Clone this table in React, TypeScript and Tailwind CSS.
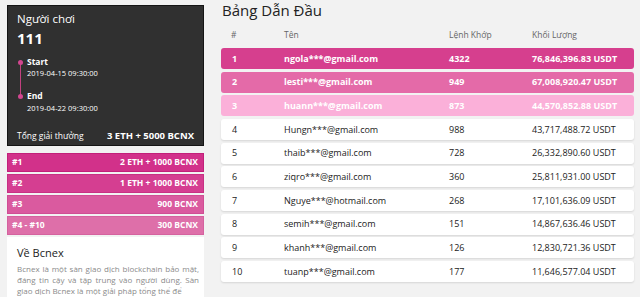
import React from "react";

const rows = [
  { n: 1, name: "ngola***@gmail.com", orders: "4322", vol: "76,846,396.83 USDT", bg: "bg-[#d63f8e]", hl: true },
  { n: 2, name: "lesti***@gmail.com", orders: "949", vol: "67,008,920.47 USDT", bg: "bg-[#e46aa8]", hl: true },
  { n: 3, name: "huann***@gmail.com", orders: "873", vol: "44,570,852.88 USDT", bg: "bg-[#fbb0d9]", hl: true },
  { n: 4, name: "Hungn***@gmail.com", orders: "988", vol: "43,717,488.72 USDT", bg: "bg-white", hl: false },
  { n: 5, name: "thaib***@gmail.com", orders: "728", vol: "26,332,890.60 USDT", bg: "bg-white", hl: false },
  { n: 6, name: "ziqro***@gmail.com", orders: "360", vol: "25,811,931.00 USDT", bg: "bg-white", hl: false },
  { n: 7, name: "Nguye***@hotmail.com", orders: "268", vol: "17,101,636.09 USDT", bg: "bg-white", hl: false },
  { n: 8, name: "semih***@gmail.com", orders: "151", vol: "14,867,636.46 USDT", bg: "bg-white", hl: false },
  { n: 9, name: "khanh***@gmail.com", orders: "126", vol: "12,830,721.36 USDT", bg: "bg-white", hl: false },
  { n: 10, name: "tuanp***@gmail.com", orders: "177", vol: "11,646,577.04 USDT", bg: "bg-white", hl: false },
];

const prizes = [
  { k: "#1", v: "2 ETH + 1000 BCNX", bg: "bg-[#d2318a] border-[#c2207a]" },
  { k: "#2", v: "1 ETH + 1000 BCNX", bg: "bg-[#d53e91] border-[#c83084]" },
  { k: "#3", v: "900 BCNX", bg: "bg-[#da5a9f] border-[#d04d94]" },
  { k: "#4 - #10", v: "300 BCNX", bg: "bg-[#de6fa9] border-[#d5629f]" },
];

export default function App() {
  return (
    <div
      className="w-[640px] h-[297px] overflow-hidden bg-[#f2f2f2] flex pl-[7px]"
      style={{ fontFamily: '"Open Sans", "Noto Sans", sans-serif' }}
    >
      {/* Left column */}
      <div className="w-[197px] shrink-0 flex flex-col pt-[5px] h-[297px]">
        <div className="h-[141px] shrink-0 bg-[#303030] border border-[#151515] text-white px-[9px] pt-[5px] flex flex-col">
          <div className="text-[11.5px] leading-[16px]">Người chơi</div>
          <div className="text-[15px] leading-[20px] font-bold mt-[1px]">111</div>
          <div className="relative mt-[8px] pl-[10px]">
            <div className="absolute left-[3px] top-[6px] w-[1px] h-[34px] bg-[#c2407f]" />
            <div className="absolute left-[0.5px] top-[3.5px] w-[5px] h-[5px] rounded-full bg-[#d24690]" />
            <div className="absolute left-[0.5px] top-[37.5px] w-[5px] h-[5px] rounded-full bg-[#d24690]" />
            <div className="text-[8.5px] leading-[12px] font-bold">Start</div>
            <div className="text-[7.5px] leading-[10px]">2019-04-15 09:30:00</div>
            <div className="text-[8.5px] leading-[12px] font-bold mt-[12px]">End</div>
            <div className="text-[7.5px] leading-[10px] mt-[1px]">2019-04-22 09:30:00</div>
          </div>
          <div className="mt-auto mb-[3px] flex justify-between items-center h-[12px]">
            <span className="text-[8.5px] leading-[12px]">Tổng giải thưởng</span>
            <span className="text-[9.5px] leading-[12px] font-bold">3 ETH + 5000 BCNX</span>
          </div>
        </div>

        <div className="mt-[7px] shrink-0 flex flex-col gap-[2px]">
          {prizes.map((p) => (
            <div
              key={p.k}
              className={`h-[19px] border ${p.bg} text-white font-bold text-[8.5px] flex items-center justify-between px-[4px]`}
            >
              <span>{p.k}</span>
              <span className="pr-[1px]">{p.v}</span>
            </div>
          ))}
        </div>

        <div className="mt-[2px] flex-1 min-h-0 overflow-hidden bg-white pl-[10px] pr-[5px] pt-[9px]">
          <div className="text-[11px] leading-[14px] text-[#222]">Về Bcnex</div>
          <p className="mt-[2.5px] text-[8px] leading-[11px] text-[#8a8a8a] text-justify">
            Bcnex là một sàn giao dịch blockchain bảo mật, đáng tin cậy và tập trung vào người dùng. Sàn giao dịch Bcnex là một giải pháp tổng thể để
          </p>
        </div>
      </div>

      {/* Right column */}
      <div className="ml-[17px] w-[413px] shrink-0 flex flex-col">
        <div className="text-[15px] leading-[20px] text-[#222] pl-[1px]">Bảng Dẫn Đầu</div>
        <div className="mt-[8px] h-[15px] flex items-center text-[8.5px] text-[#666]">
          <span className="w-[63px] pl-[10px]">#</span>
          <span className="w-[165px]">Tên</span>
          <span className="w-[83px]">Lệnh Khớp</span>
          <span>Khối Lượng</span>
        </div>
        <div className="mt-[5px] flex flex-col gap-[2.67px]">
          {rows.map((r) => (
            <div
              key={r.n}
              className={`h-[21px] rounded-[3px] ${r.bg} flex items-center text-[9px] ${
                r.hl ? "text-white font-bold" : "text-[#222] shadow-[0_1px_2px_rgba(0,0,0,0.12)]"
              }`}
            >
              <span className="w-[63px] pl-[11px]">{r.n}</span>
              <span className="w-[165px]">{r.name}</span>
              <span className="w-[83px]">{r.orders}</span>
              <span>{r.vol}</span>
            </div>
          ))}
        </div>
      </div>
    </div>
  );
}
